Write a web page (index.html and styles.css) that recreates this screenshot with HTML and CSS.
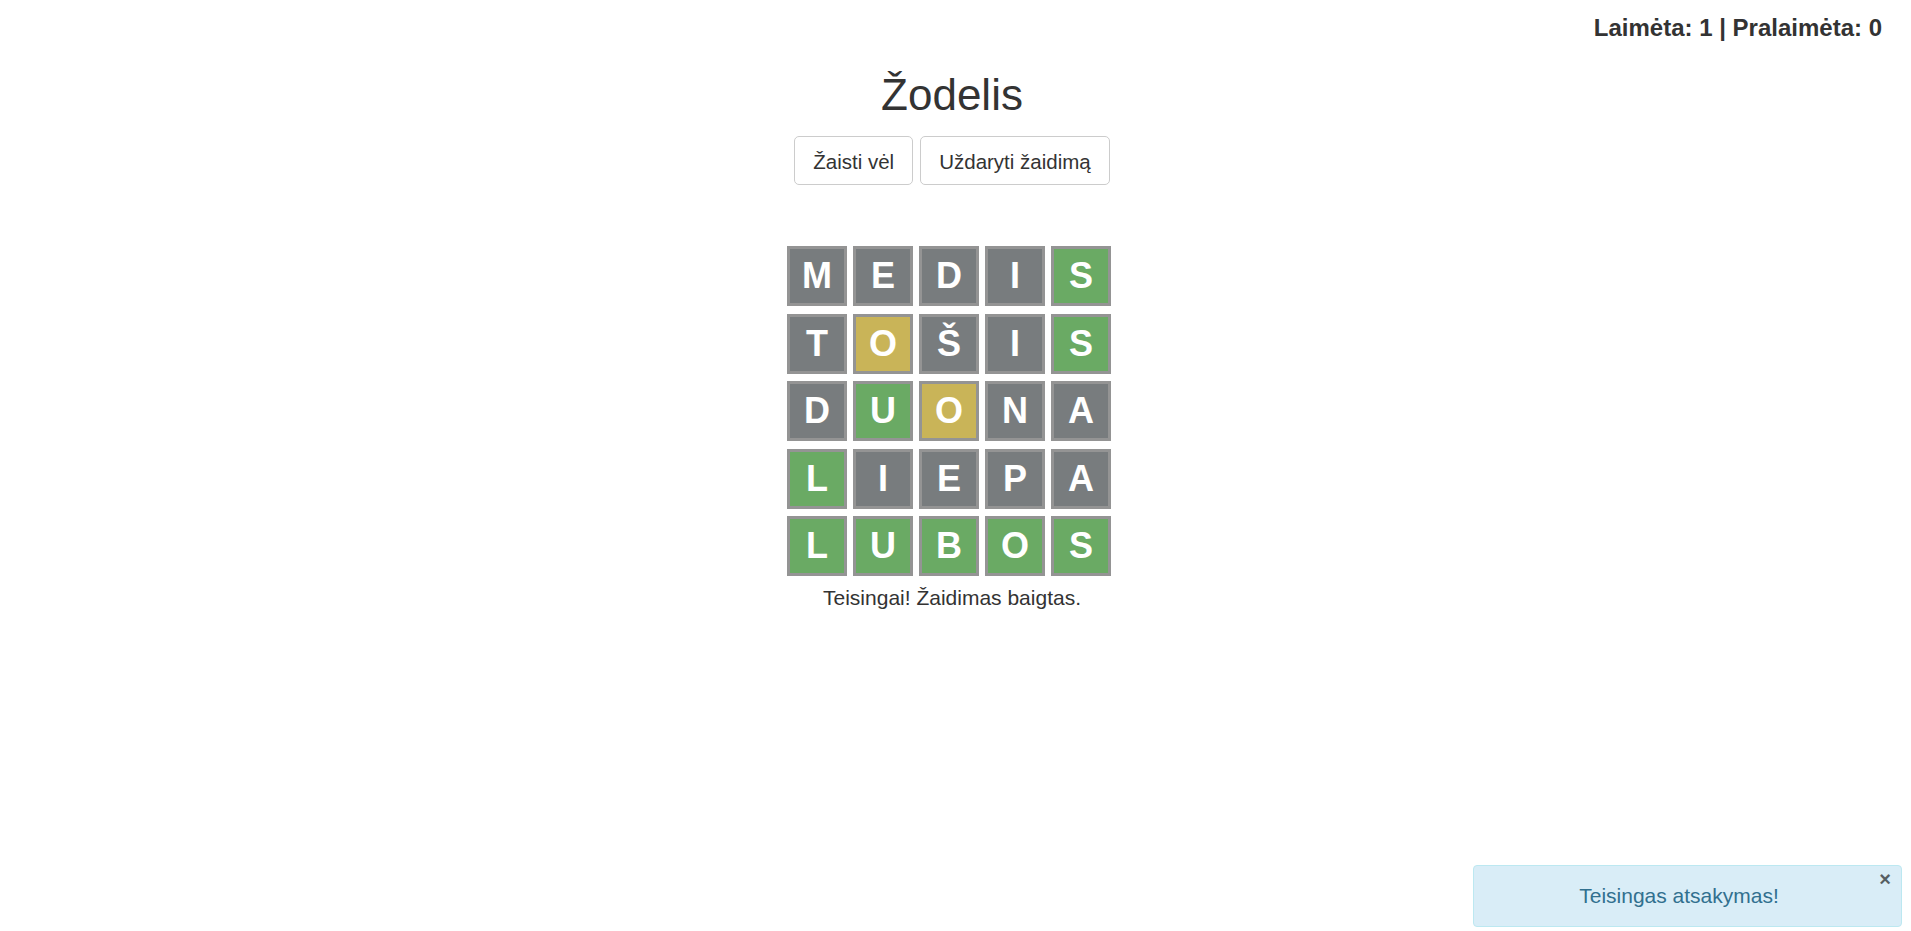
FILE: index.html
```html
<!DOCTYPE html>
<html lang="lt">
<head>
<meta charset="utf-8">
<title>Žodelis</title>
<link rel="stylesheet" href="styles.css">
</head>
<body>
<div class="score">Laimėta: 1 | Pralaimėta: 0</div>
<main class="main">
  <h1 class="title">Žodelis</h1>
  <div class="actions">
    <button class="btn">Žaisti vėl</button>
    <button class="btn">Uždaryti žaidimą</button>
  </div>
  <div class="board-wrap">
    <div class="board">
      <div class="tile gray">M</div><div class="tile gray">E</div><div class="tile gray">D</div><div class="tile gray">I</div><div class="tile green">S</div>
      <div class="tile gray">T</div><div class="tile yellow">O</div><div class="tile gray">Š</div><div class="tile gray">I</div><div class="tile green">S</div>
      <div class="tile gray">D</div><div class="tile green">U</div><div class="tile yellow">O</div><div class="tile gray">N</div><div class="tile gray">A</div>
      <div class="tile green">L</div><div class="tile gray">I</div><div class="tile gray">E</div><div class="tile gray">P</div><div class="tile gray">A</div>
      <div class="tile green">L</div><div class="tile green">U</div><div class="tile green">B</div><div class="tile green">O</div><div class="tile green">S</div>
    </div>
  </div>
  <p class="status">Teisingai! Žaidimas baigtas.</p>
</main>
<div class="toast">
  <span class="toast-text">Teisingas atsakymas!</span>
  <span class="toast-close">×</span>
</div>
</body>
</html>
```
FILE: styles.css
```css
html, body {
  margin: 0;
  padding: 0;
  background: #fff;
}
body {
  font-family: "Liberation Sans", Arial, Helvetica, sans-serif;
  color: #333;
  font-size: 20px;
  height: 931px;
  overflow: hidden;
  position: relative;
}
.score {
  text-align: right;
  font-weight: bold;
  font-size: 24px;
  line-height: 28px;
  padding: 14px 29px 0 0;
  color: #333;
}
.main {
  display: flex;
  flex-direction: column;
  align-items: center;
  padding-right: 7px;
}
.title {
  margin: 29px 0 0;
  font-size: 44px;
  font-weight: normal;
  line-height: 48px;
  color: #333;
}
.actions {
  display: flex;
  gap: 7px;
  margin-top: 17px;
}
.btn {
  font-family: inherit;
  font-size: 20.5px;
  line-height: 27px;
  padding: 11px 18px 9px;
  border: 1px solid #ccc;
  border-radius: 5px;
  background: #fff;
  color: #333;
}
.board-wrap {
  display: flex;
  justify-content: center;
  padding-right: 6px;
  margin-top: 61px;
}
.board {
  display: grid;
  grid-template-columns: repeat(5, 60px);
  grid-auto-rows: 60px;
  column-gap: 6px;
  row-gap: 7.5px;
}
.tile {
  box-sizing: border-box;
  border: 3px solid #949494;
  display: flex;
  align-items: center;
  justify-content: center;
  color: #fff;
  font-weight: bold;
  font-size: 36px;
  line-height: 1;
}
.gray { background: #787c7e; }
.green { background: #6aaa64; }
.yellow { background: #c9b458; }
.status {
  margin: 8px 0 0;
  font-size: 21px;
  line-height: 28px;
  color: #333;
}
.toast {
  position: absolute;
  right: 9px;
  bottom: 4px;
  width: 429px;
  box-sizing: border-box;
  padding: 16px 33px 16px 16px;
  background: #d9edf7;
  border: 1px solid #bce8f1;
  border-radius: 4px;
  color: #31708f;
  text-align: center;
  font-size: 21px;
  line-height: 28px;
}
.toast-close {
  position: absolute;
  top: 3px;
  right: 10px;
  font-size: 20px;
  font-weight: bold;
  line-height: 21px;
  color: #000;
  opacity: 0.6;
}
```
